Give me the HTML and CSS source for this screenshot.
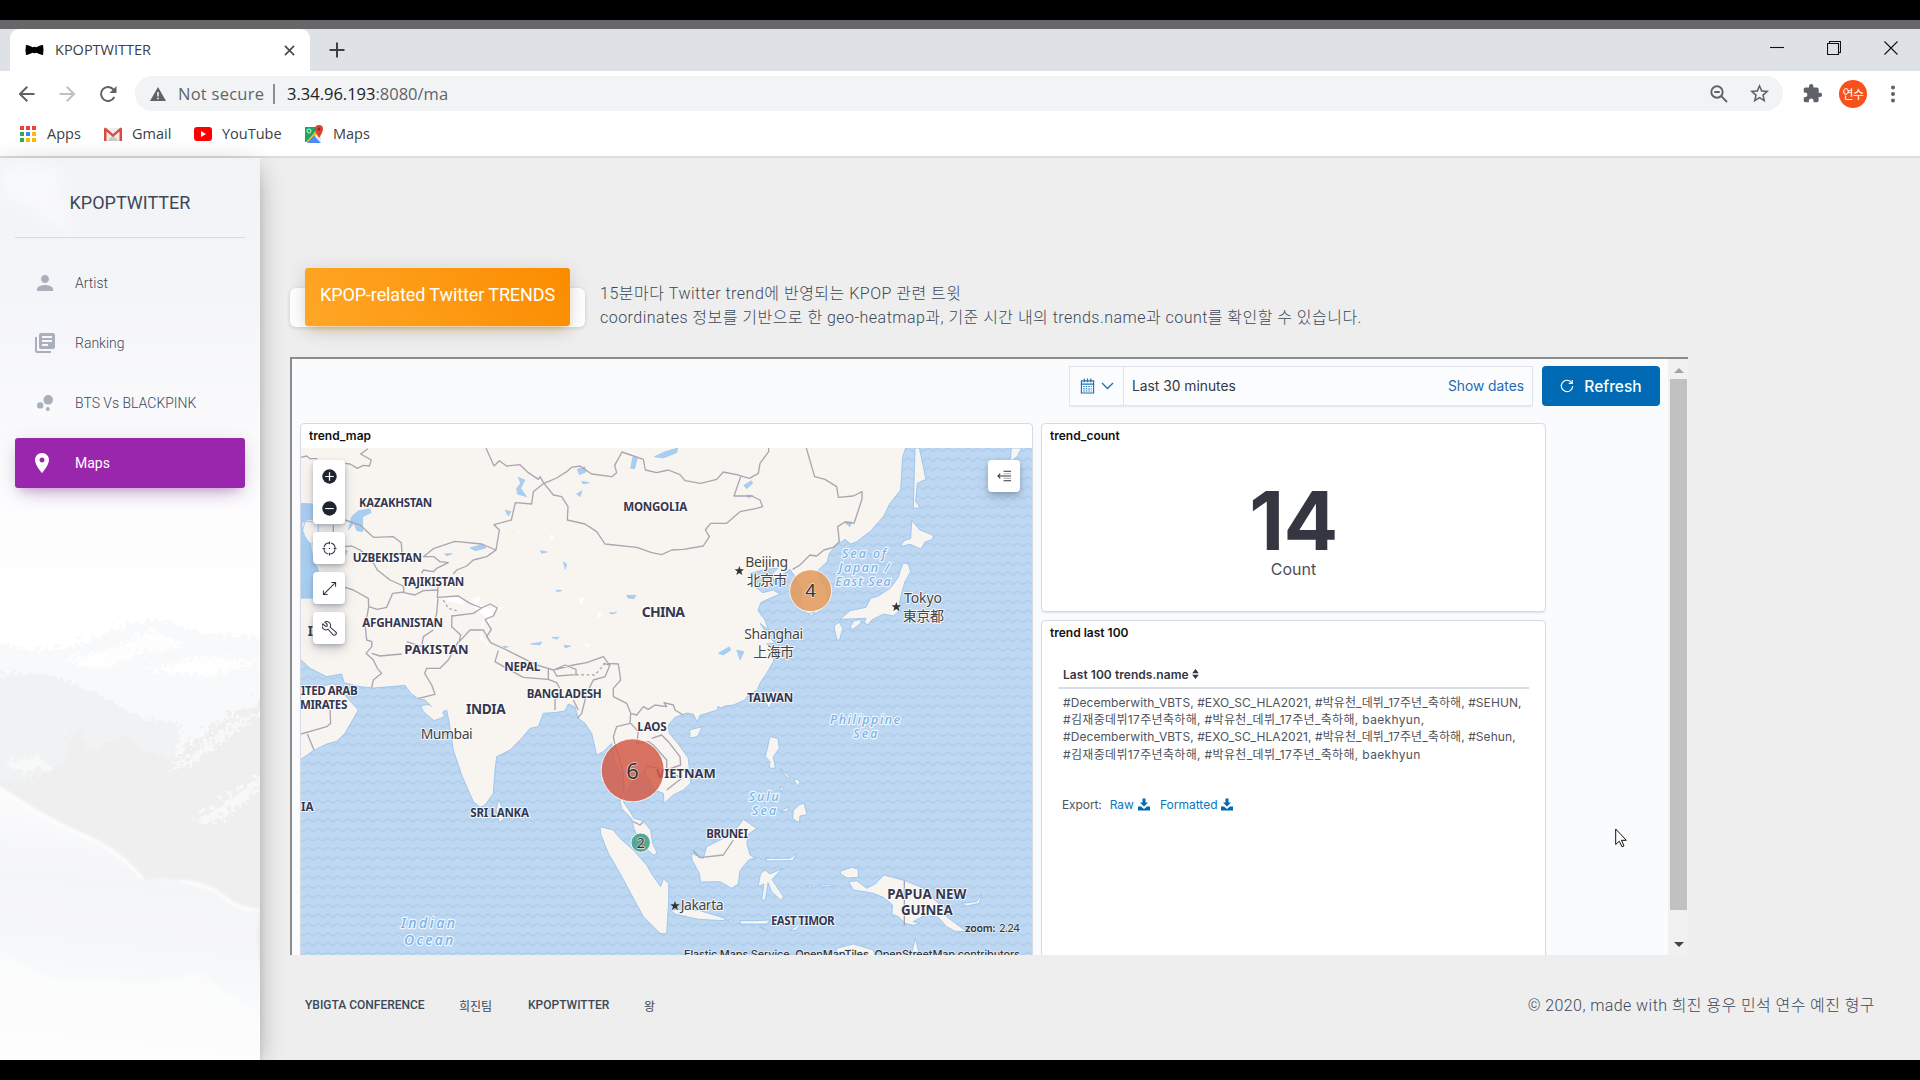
FILE: index.html
```html
<!DOCTYPE html>
<html lang="ko">
<head>
<meta charset="utf-8">
<title>KPOPTWITTER</title>
<link rel="stylesheet" href="styles.css">
</head>
<body>
<div class="screen">
  <div class="window-edge"></div>
  <header class="tabstrip">
    <div class="tab">
      <svg class="favicon" viewBox="0 0 20 12"><path d="M1 1Q2 0 8 3Q10 2.300 12 3Q18 0 19 1Q20 6 19 11Q18 12 12 9Q10 9.700 8 9Q2 12 1 11Q0 6 1 1Z"/></svg>
      <span class="tab-title">KPOPTWITTER</span>
      <svg class="tab-close" viewBox="0 0 12 12"><path d="M1 1L11 11M11 1L1 11"/></svg>
    </div>
    <svg class="tab-new" viewBox="0 0 16 16"><path d="M8 0.500V15.500M0.500 8H15.500"/></svg>
    <div class="window-buttons">
      <svg viewBox="0 0 14 14"><path d="M0 6.500H14"/></svg>
      <svg viewBox="0 0 14 14"><path d="M.5 2.500H11.500V13.500H.5ZM2.500 2.500V.5H13.500V11.500H11.500"/></svg>
      <svg viewBox="0 0 14 14"><path d="M.5 .5L13.500 13.500M13.500 .5L.5 13.500"/></svg>
    </div>
  </header>
  <div class="toolbar">
    <svg class="nav" viewBox="0 0 16 16"><path d="M15.500 8H1.500M8.300 .8L1 8L8.300 15.200"/></svg>
    <svg class="nav dim" viewBox="0 0 16 16"><path d="M.5 8H14.500M7.700 .8L15 8L7.700 15.200"/></svg>
    <svg class="nav reload" viewBox="0 0 18 18"><path d="M15.300 12A7 7 0 1 1 14.500 4.600L16 6.200"/><path class="solid" d="M17.500 1V8H10.500Z"/></svg>
    <div class="omnibox">
      <svg class="warn" viewBox="0 0 16 14"><path d="M8 0L16 14H0Z"/><path d="M8 5V9.500M8 10.700V12.300" stroke="#f1f3f4" stroke-width="1.600"/></svg>
      <span class="insecure">Not secure</span>
      <span class="divider"></span>
      <span class="url"><b>3.34.96.193</b>:8080/ma</span>
      <svg class="lens" viewBox="0 0 18 18"><circle cx="7" cy="7" r="5.700"/><path d="M4.300 7H9.700M11.200 11.200L17 17"/></svg>
      <svg class="star" viewBox="0 0 24 24"><path d="M22 9.240l-7.190-.62L12 2 9.190 8.630 2 9.240l5.460 4.730L5.820 21 12 17.270 18.180 21l-1.630-7.030L22 9.240zM12 15.400l-3.760 2.270 1-4.280-3.320-2.880 4.380-.38L12 6.100l1.710 4.040 4.380.38-3.320 2.880 1 4.280L12 15.400z"/></svg>
    </div>
    <svg class="puzzle" viewBox="0 0 24 24"><path d="M20.500 11H19V7c0-1.100-.9-2-2-2h-4V3.500a2.500 2.500 0 0 0-5 0V5H4c-1.100 0-2 .9-2 2v3.800h1.500a2.700 2.700 0 0 1 0 5.400H2V20c0 1.100.9 2 2 2h3.800v-1.500a2.700 2.700 0 0 1 5.400 0V22H17c1.100 0 2-.9 2-2v-4h1.500a2.500 2.500 0 0 0 0-5z"/></svg>
    <span class="avatar">연수</span>
    <svg class="dots" viewBox="0 0 4 18"><circle cx="2" cy="2.500" r="2"/><circle cx="2" cy="9" r="2"/><circle cx="2" cy="15.500" r="2"/></svg>
  </div>
  <nav class="bookmarks">
    <span class="bookmark apps"><svg viewBox="0 0 18 18"><path fill="#ea4335" d="M1 1h4v4H1zM7 1h4v4H7zM13 1h4v4h-4z"/><path fill="#34a853" d="M1 7h4v4H1zM1 13h4v4H1z"/><path fill="#4285f4" d="M7 7h4v4H7z"/><path fill="#fbbc05" d="M13 7h4v4h-4zM7 13h4v4H7zM13 13h4v4h-4z"/></svg><i>Apps</i></span>
    <span class="bookmark gmail"><svg viewBox="0 0 18 18"><path fill="#eee" d="M2 3H16V16H2Z"/><path fill="#ccc" d="M3 16L9 10L15 16Z"/><path fill="#dc4a3d" d="M0 4Q0 2.500 1.500 2.500L9 9L16.500 2.500Q18 2.500 18 4V16H15.500V6.500L9 12L2.500 6.500V16H0Z"/></svg><i>Gmail</i></span>
    <span class="bookmark youtube"><svg viewBox="0 0 18 18"><rect y="2" width="18" height="14" rx="3" fill="#f00"/><path fill="#fff" d="M7 6L12 9L7 12Z"/></svg><i>YouTube</i></span>
    <span class="bookmark gmaps"><svg viewBox="0 0 18 18"><path fill="#1fa463" d="M0 2H14L2 17H0Z"/><path fill="#fbbc05" d="M1 17L11 6L13.500 8.500L6 17Z"/><path fill="#4c8bf5" d="M2 18L9 10.500L16 18Z"/><path fill="#e8eaed" d="M13 9L16 12V17L10 10.500Z"/><circle cx="4" cy="6" r="2" fill="none" stroke="#d8f0e0"/><path fill="#db4437" d="M14 0A4 4 0 0 1 18 4Q18 7 14 13Q10 7 10 4A4 4 0 0 1 14 0Z"/><circle cx="14" cy="4" r="1.500" fill="#8c2a20"/></svg><i>Maps</i></span>
  </nav>

  <main class="page">
    <aside class="sidebar">
      <svg class="mountains" viewBox="0 0 260 902" preserveAspectRatio="none">
        <defs>
          <linearGradient id="sky" x2="0" y2="1"><stop offset="0" stop-color="#f1f3f5"/><stop offset=".14" stop-color="#f4f5f9"/><stop offset=".36" stop-color="#fcfcfe"/><stop offset=".5" stop-color="#fff"/></linearGradient>
          <linearGradient id="snow" x1=".4" x2=".3" y2="1"><stop offset="0" stop-color="#fdfdfe"/><stop offset=".35" stop-color="#f4f5f7"/><stop offset=".7" stop-color="#f8f9fa"/><stop offset="1" stop-color="#fdfdfd"/></linearGradient>
          <filter id="rough"><feTurbulence baseFrequency=".12" numOctaves="4" seed="5"/><feDisplacementMap in="SourceGraphic" scale="16"/></filter>
          <filter id="soft"><feGaussianBlur stdDeviation="8"/></filter>
          <filter id="haze"><feGaussianBlur stdDeviation="1.500"/></filter>
        </defs>
        <path fill="url(#sky)" d="M0 0H260V902H0Z"/>
        <path fill="#fff" opacity=".5" filter="url(#soft)" d="M0 10Q30 0 60 12Q75 30 50 38Q80 55 72 74Q40 60 25 45Q5 45 0 30Z"/>
        <g filter="url(#rough)">
          <path fill="#f7f9fa" d="M-10 480L30 490L70 485L105 470L150 458L200 472L280 480V620H-10Z"/>
          <path fill="#fff" opacity=".8" d="M60 500L110 485L150 470L185 485L140 490L100 508ZM140 510L200 495L260 500L210 515Z"/>
          <path fill="#f0f2f3" d="M-10 515L40 512L90 530L140 558L180 562L160 640H-10Z"/>
          <path fill="#efefef" d="M-10 620L40 618L60 600L75 560L85 590L125 575L140 590L170 600L215 560L280 530V775H190L80 720L-10 680Z"/>
          <path fill="#f7f8f8" d="M0 600L35 595L50 607L15 612ZM165 612L230 560L275 545L225 575L180 610ZM190 660L275 605V612L215 662Z"/>
        </g>
        <g filter="url(#haze)">
          <path fill="url(#snow)" d="M-5 625Q45 665 90 680Q120 692 145 722Q180 715 215 735Q240 755 265 755V907H-5Z"/>
          <path fill="none" stroke="#fff" stroke-width="3" d="M0 630Q50 664 90 680Q120 694 143 721M180 723Q210 726 225 740Q240 753 260 752"/>
          <path fill="#fefefe" opacity=".6" d="M-5 790L50 820L150 825L200 815L265 860V907H-5Z"/>
          <path fill="#eee" d="M262 745Q252 780 262 815Z"/>
        </g>
      </svg>
      <div class="brand">KPOPTWITTER</div>
      <ul class="menu">
        <li><svg viewBox="0 0 24 24"><path d="M12 12c2.210 0 4-1.790 4-4s-1.790-4-4-4-4 1.790-4 4 1.790 4 4 4zm0 2c-2.670 0-8 1.340-8 4v2h16v-2c0-2.660-5.330-4-8-4z"/></svg><span>Artist</span></li>
        <li><svg viewBox="0 0 24 24"><path d="M4 6H2v14c0 1.100.9 2 2 2h14v-2H4V6zm16-4H8c-1.100 0-2 .9-2 2v12c0 1.100.9 2 2 2h12c1.100 0 2-.9 2-2V4c0-1.100-.9-2-2-2zm-1 9H9V9h10v2zm-4 4H9v-2h6v2zm4-8H9V5h10v2z"/></svg><span>Ranking</span></li>
        <li><svg viewBox="0 0 24 24"><circle cx="7.200" cy="14.400" r="3.200"/><circle cx="14.800" cy="18" r="2"/><circle cx="15.200" cy="8.800" r="4.800"/></svg><span>BTS Vs BLACKPINK</span></li>
        <li class="active"><svg viewBox="0 0 24 24"><path d="M12 2C8.130 2 5 5.130 5 9c0 5.250 7 13 7 13s7-7.750 7-13c0-3.870-3.130-7-7-7zm0 9.500c-1.380 0-2.500-1.120-2.500-2.500s1.120-2.500 2.500-2.500 2.500 1.120 2.500 2.500-1.120 2.500-2.500 2.500z"/></svg><span>Maps</span></li>
      </ul>
    </aside>

    <section class="content">
      <div class="intro">
        <div class="card"><h4>KPOP-related Twitter TRENDS</h4></div>
        <p><span class="d1">15분마다 Twitter trend에 반영되는 KPOP 관련 트윗</span><br><span class="d2">coordinates 정보를 기반으로 한 geo-heatmap과, 기준 시간 내의 trends.name과 count를 확인할 수 있습니다.</span></p>
      </div>

      <div class="frame">
        <div class="dash">
          <div class="query">
            <div class="picker">
              <div class="quick">
                <svg class="cal" viewBox="0 0 16 16"><path d="M1.500 2.500H14.500V15.500H1.500ZM1.500 6H14.500M4.500 0V4M8 0V4M11.500 0V4"/><path stroke-dasharray="1.500 1.200" d="M3.500 8.500H12.500M3.500 11H12.500M3.500 13.300H12.500"/></svg>
                <svg class="chev" viewBox="0 0 12 8"><path d="M.5 1L6 6.500L11.500 1"/></svg>
              </div>
              <span class="range">Last 30 minutes</span>
              <span class="show">Show dates</span>
            </div>
            <button class="refresh"><svg viewBox="0 0 16 16"><path d="M13.500 4.500A6.500 6.500 0 1 0 14.500 8M14 1V5H10"/></svg><span>Refresh</span></button>
          </div>
          <div class="panels">
            <div class="panel map-panel">
              <h5>trend_map</h5>
              <div class="map">
                <svg class="canvas" viewBox="33 324 2196 1521" preserveAspectRatio="none">
                  <defs>
                    <pattern id="waves" width="30" height="28.500" patternUnits="userSpaceOnUse"><path d="M0 14Q7 24 15 17Q22 10 30 14" fill="none" stroke="#b0cde8" stroke-width="5"/></pattern>
                  </defs>
                  <rect x="33" y="324" width="2196" height="1521" fill="#bed8f3"/>
                  <rect x="33" y="324" width="2196" height="1521" fill="url(#waves)"/>
                  <g class="land">
                    <path d="M20 300H1856L1838 350L1832 450L1800 490L1780 530L1740 575L1700 605L1682 612L1665 598L1640 615L1618 640L1612 665L1585 690L1590 720L1608 745L1613 790L1590 812L1566 826L1548 818L1530 790L1535 750L1515 710L1500 688L1476 705L1450 720L1448 700L1465 684L1420 690L1380 700L1395 740L1418 758L1450 750L1470 762L1440 775L1412 788L1404 812L1425 840L1436 870L1410 850L1430 880L1455 910L1430 912L1458 930L1450 965L1430 1000L1410 1030L1402 1050L1375 1065L1365 1080L1330 1095L1305 1098L1290 1105L1285 1098L1282 1110L1230 1126L1222 1146L1210 1122L1190 1119L1155 1132L1135 1155L1138 1180L1165 1212L1195 1255L1202 1330L1180 1350L1150 1365L1122 1390L1120 1360L1095 1350L1070 1320L1045 1296L1035 1290L1030 1320L1005 1360L1000 1385L1017 1410L1032 1435L1060 1443L1082 1470L1088 1510L1102 1540L1090 1545L1070 1528L1045 1500L1030 1460L1026 1438L995 1405L990 1385L1003 1350L995 1300L975 1270L965 1210L940 1235L920 1245L912 1210L905 1180L885 1150L865 1135L855 1100L835 1092L825 1113L800 1117L760 1120L745 1160L720 1165L695 1195L660 1230L620 1250L615 1290L610 1360L585 1395L570 1402L550 1385L515 1305L490 1230L478 1150L470 1110L458 1116L464 1130L432 1142L400 1115L392 1097L418 1093L424 1100L405 1080L385 1076L362 1060L345 1036L300 1040L250 1044L210 1040L162 1028L155 1002L110 1010L60 985L33 960H20Z"/>
                    <path d="M20 1035L90 1040L132 1030L150 1060L165 1066L205 1110L165 1180L140 1204L110 1212L70 1232L33 1258H20Z"/>
                    <path d="M1875 324H1888L1908 418L1882 430L1877 485L1891 503L1870 505ZM2164 324H2195L2182 350L2160 365ZM1865 542L1890 570L1930 586L1928 598L1905 606L1893 627L1860 613L1830 620L1842 602L1862 595ZM1840 668L1855 672L1862 695L1845 725L1832 770L1825 815L1810 828L1780 822L1745 840L1735 854L1722 850L1728 835L1650 838L1680 812L1728 802L1742 775L1765 768L1800 745L1825 712L1832 688ZM1680 862L1692 842L1715 838L1710 852L1688 868ZM1632 858L1648 846L1658 865L1650 895L1642 903L1636 880ZM1555 822L1575 815L1565 828Z"/>
                    <path d="M626 1378L648 1430L628 1448L618 1410ZM930 1460L970 1470L990 1495L1030 1530L1070 1575L1085 1602L1112 1640L1120 1616L1136 1630L1136 1682L1130 1782L1110 1780L1060 1730L1025 1665L990 1600L955 1540L932 1482ZM1140 1710L1180 1708L1230 1712L1305 1735L1302 1742L1225 1738L1155 1722ZM1310 1740L1332 1741L1325 1748ZM1350 1742L1390 1742L1440 1740L1430 1752L1350 1752ZM1408 1760L1435 1772L1430 1774ZM1500 1772L1535 1745L1520 1770ZM1199 1170L1237 1160L1222 1190L1200 1194ZM1447 1050L1458 1062L1437 1106L1426 1085ZM1440 1190L1464 1195L1468 1225L1450 1250L1456 1285L1438 1284L1440 1265L1426 1250ZM1360 1438L1400 1465L1376 1482L1370 1510L1380 1545L1395 1553L1376 1560L1350 1592L1345 1632L1325 1645L1290 1625L1232 1626L1228 1600L1206 1560L1204 1540L1240 1555L1250 1520L1310 1490L1340 1465ZM1510 1412L1526 1395L1542 1390L1551 1424L1530 1428L1528 1448L1508 1436ZM1520 1317L1530 1325L1524 1340L1512 1320ZM1470 1340L1482 1345L1475 1355ZM1470 1286L1500 1310L1492 1314ZM1470 1415L1498 1400L1492 1414ZM1428 1555L1500 1555L1520 1540L1508 1562L1430 1563ZM1425 1590L1440 1602L1478 1585L1446 1618L1480 1670L1474 1682L1445 1655L1434 1628L1426 1680L1415 1680L1422 1632L1404 1640L1412 1600ZM1550 1640L1565 1636L1562 1645ZM1590 1632L1632 1636L1630 1640L1592 1638ZM1650 1594L1685 1582L1705 1588L1705 1612L1672 1614L1652 1602ZM1676 1625L1700 1622L1730 1645L1755 1632L1782 1605L1845 1622L1900 1644L1955 1700L1970 1730L2030 1775L1995 1774L1970 1760L1945 1732L1905 1725L1870 1745L1890 1750L1870 1756L1845 1750L1825 1730L1805 1722L1808 1695L1780 1672L1750 1660L1722 1655L1690 1650ZM2015 1690L2060 1685L2075 1662L2068 1690L2030 1698ZM1640 1825L1690 1812L1750 1830L1755 1850H1640ZM1876 1795L1890 1850H1862Z"/>
                    <path d="M45 545L85 545L85 610L60 612L35 580Z"/>
                  </g>
                  <g class="lakes">
                    <path d="M33 490L75 492V540Q40 535 35 555Q40 590 62 612L70 660L85 690V775H33ZM175 570L185 530L205 512L240 506L244 518L218 530L218 575L200 572L192 550ZM685 412L705 420L692 445L710 470L682 462L680 445L692 430ZM645 510L663 515L655 528ZM1022 385L1028 352L1042 354L1034 386ZM862 388L885 380L888 396L868 404ZM875 424L898 428L880 432ZM860 462L876 452L870 470ZM1092 350L1125 335L1163 324L1160 338L1120 354ZM540 624L580 612L588 624L556 632ZM1010 766L1038 766L1032 776L1014 774ZM752 632L772 636L755 640ZM820 666L830 672L826 688ZM464 641L486 641L470 648ZM798 750L816 752L802 755ZM958 818L980 818L965 822ZM785 892L808 892L800 898ZM722 912L755 906L750 915ZM822 916L842 918L826 924ZM640 918L655 920L642 924ZM165 630L172 632L168 645ZM1361 436L1384 422L1388 430L1370 446ZM1662 546L1685 545L1680 560ZM1372 465L1390 467L1375 474ZM1285 940L1318 920L1322 930L1300 945ZM1340 930L1362 935L1350 960Z"/>
                  </g>
                  <g class="snowfields"><path d="M550 775L575 770L560 792L600 805L650 800L610 815L595 850L580 835L570 900L590 905L600 930L575 885L585 830L550 800ZM780 582L792 592L782 600ZM868 776L886 770L872 795ZM920 815L936 825L925 835ZM455 772L505 765L525 795L480 785ZM680 575L694 578L686 582ZM880 912L906 915L890 922Z"/></g>
                  <g class="borders">
                    <path d="M33 352L50 348L60 356L82 356M165 370L180 372L202 385L220 376L238 378L244 360L212 342L234 326M588 324L612 378L628 362L650 378L690 374L715 398L745 418L750 410L762 430L800 414L830 395L845 382L870 378L905 402L965 410L980 398L974 376L996 336L1060 358L1066 390L1100 398L1135 390L1170 404L1185 422L1232 430L1280 418L1300 396L1340 404L1378 415L1405 400L1410 370L1436 335V324M762 430L790 465L815 470L834 500L832 540L885 552L920 575L945 612L1040 622L1085 638L1115 644L1145 630L1180 628L1240 618L1258 590L1246 570L1262 550L1310 550L1350 515L1400 505L1418 500L1410 480L1385 468L1332 468L1352 410M1549 324L1574 410L1605 418L1640 440L1645 472L1690 468L1716 455L1716 478L1692 550L1665 546L1643 560L1648 605L1630 622L1602 630L1580 648L1560 645L1530 675L1508 688"/>
                    <path d="M762 430L730 455L725 492L676 488L664 540L612 554L628 570L618 630L575 612L495 604L432 625L400 650L432 650L450 665L475 668L440 685L430 695L400 690L395 700M618 630L590 650L550 660L530 678L500 690L490 702M165 540L210 555L250 592L310 590L334 608L336 640M165 620L185 618L210 630L245 660L262 690L300 720L340 738L342 758L375 765L400 752L445 750M130 555V576M165 742L190 750L235 775L236 800L262 808L290 802L308 760L342 756M236 800L226 860L230 900L246 905L245 920L228 940L250 960L262 985L275 1000L250 1020L245 1043M444 740L442 772L505 768L540 790L575 804L600 792L622 804L610 828L585 838L604 868L590 890L602 908L650 930L700 955L740 975L775 985L790 990L850 975L890 968L940 950L955 970L985 972L992 1020L970 1045L970 1070L1010 1090L1022 1120L1040 1125L1060 1100L1075 1108L1095 1095L1130 1100L1122 1088L1150 1095L1155 1110L1180 1125M444 775L440 820L430 855M486 825L485 860L512 885L508 905L540 870L580 870L602 908M486 828L550 820L575 804M430 870L400 890L395 920L350 905M245 940L270 948L335 942M505 905L475 960L450 985L410 985L404 1000L425 1035L435 1063L385 1075M625 932L615 965L650 985L700 1012L775 1018L775 985M775 1018L800 1028L812 1050L795 1080L795 1110M790 990L825 975L858 988L858 1004L800 1008L790 990M940 970L960 975L945 1010L910 1020L890 1060L875 1120L862 1135M850 1080L865 1110M1022 1120L1020 1150L980 1160L970 1190L976 1220L990 1260L1000 1300L1002 1350M1022 1150L1045 1175L1040 1210L1075 1205L1090 1215L1130 1260L1130 1290M1085 1195L1115 1185L1135 1205L1170 1250L1172 1275L1130 1290L1070 1278L1062 1300L1080 1325M1130 1290L1175 1315L1130 1350M1030 1445L1050 1455L1060 1445M120 1110L122 1150L110 1160L33 1182M52 1182L72 1230M1210 1532L1230 1553L1300 1545L1330 1500M1843 1622V1757"/>
                    <path stroke-dasharray="8 8" d="M858 1004L915 1005L945 970M460 780L475 805L500 812"/>
                  </g>
                  <g class="country" font-size="35" lengthAdjust="spacingAndGlyphs">
                    <text x="207" y="500" textLength="220">KAZAKHSTAN</text><text x="1000" y="512" textLength="192">MONGOLIA</text><text x="188" y="667" textLength="208">UZBEKISTAN</text><text x="337" y="738" textLength="186">TAJIKISTAN</text><text x="217" y="860" textLength="242">AFGHANISTAN</text><text x="53" y="888" font-size="40">I</text><text x="343" y="942" textLength="193" font-size="39">PAKISTAN</text><text x="1055" y="832" textLength="130" font-size="42">CHINA</text><text x="643" y="993" textLength="108">NEPAL</text><text x="710" y="1075" textLength="225">BANGLADESH</text><text x="528" y="1123" textLength="119" font-size="41">INDIA</text><text x="1042" y="1172" textLength="88">LAOS</text><text x="33" y="1064" textLength="170">ITED ARAB</text><text x="30" y="1106" textLength="142">MIRATES</text><text x="33" y="1414">IA</text><text x="541" y="1431" textLength="176">SRI LANKA</text><text x="1098" y="1315" textLength="179" font-size="39">VIETNAM</text><text x="1372" y="1086" textLength="138">TAIWAN</text><text x="1249" y="1494" textLength="125">BRUNEI</text><text x="1443" y="1756" textLength="191">EAST TIMOR</text><text x="1792" y="1677" textLength="237" font-size="40">PAPUA NEW</text><text x="1833" y="1726" textLength="155" font-size="40">GUINEA</text>
                  </g>
                  <g class="city" font-size="42">
                    <text x="392" y="1198" textLength="156">Mumbai</text><text x="1172" y="1711" textLength="129">Jakarta</text><text x="1842" y="790" textLength="114">Tokyo</text><text x="1838" y="842" textLength="124">東京都</text><text x="1366" y="682" textLength="128">Beijing</text><text x="1370" y="735" textLength="122">北京市</text><text x="1363" y="898" textLength="176">Shanghai</text><text x="1390" y="950" textLength="122">上海市</text>
                    <path id="capital" d="M1348 678L1351.500 688H1362L1354 694.500L1357 705L1348 699L1339 705L1342 694.500L1334 688H1344.500Z"/><use href="#capital" x="471" y="108"/><use href="#capital" x="-193" y="1005"/>
                  </g>
                  <g class="sea" font-size="37">
                    <text x="1656" y="653" textLength="132">Sea of</text><text x="1646" y="696" textLength="152">Japan /</text><text x="1636" y="738" textLength="166">East Sea</text><text x="1620" y="1153" textLength="210">Philippine</text><text x="1690" y="1195" textLength="72">Sea</text><text x="1376" y="1382" textLength="90">Sulu</text><text x="1386" y="1424" textLength="72">Sea</text><text x="333" y="1765" textLength="162" font-size="42">Indian</text><text x="342" y="1815" textLength="148" font-size="42">Ocean</text>
                  </g>
                  <g class="points">
                    <circle cx="1562" cy="752" r="63" fill="#e29b5c" fill-opacity=".88"/><circle cx="1028" cy="1291" r="94.500" fill="#d25c48" fill-opacity=".85"/><circle cx="1052" cy="1508" r="29" fill="#54a794"/>
                  </g>
                  <g class="amount"><text x="1562" y="771" font-size="56">4</text><text x="1028" y="1316" font-size="66">6</text><text x="1052" y="1524" font-size="44">2</text></g>
                  <g class="meta"><text x="2024" y="1777" textLength="93" font-weight="600">zoom:</text><text x="2127" y="1777" textLength="63">2.24</text><text x="1182" y="1853" textLength="1008" font-weight="500">Elastic Maps Service, OpenMapTiles, OpenStreetMap contributors</text></g>
                </svg>
                <div class="controls">
                  <div class="ctl double"><svg viewBox="0 0 16 16"><circle cx="8" cy="8" r="7.700"/><path d="M8 3.500V12.500M3.500 8H12.500"/></svg><svg viewBox="0 0 16 16"><circle cx="8" cy="8" r="7.700"/><path d="M3.500 8H12.500"/></svg></div>
                  <div class="ctl"><svg class="line" viewBox="0 0 16 16"><circle cx="8" cy="8" r="6" stroke-dasharray="7.400 2" stroke-dashoffset="-1"/><path d="M8 .5V3.500M8 12.500V15.500M.5 8H3.500M12.500 8H15.500M7.300 8H8.700"/></svg></div>
                  <div class="ctl"><svg class="line" viewBox="0 0 16 16"><path d="M1.500 14.500L14.500 1.500M10 1.500H14.500V6M1.500 10V14.500H6"/></svg></div>
                  <div class="ctl"><svg class="line" viewBox="0 0 16 16"><path d="M3 1.200A4 4 0 0 1 8.600 6.500L14.600 11.700A1.900 1.900 0 0 1 11.800 14.700L6.500 8.700A4 4 0 0 1 1 3L3.500 5.500H5.500V3.500ZM13 13H13.400"/></svg></div>
                </div>
                <div class="ctl layers"><svg class="line" viewBox="0 0 16 16"><path d="M7 2.500H15M1 7.500H15M7 12.500H15M3.500 5L1 7.500L3.500 10"/><path stroke-opacity=".35" d="M7 5H15M7 10H15"/></svg></div>
              </div>
            </div>
            <div class="side">
              <div class="panel count">
                <h5>trend_count</h5>
                <div class="metric"><strong>14</strong><span>Count</span></div>
              </div>
              <div class="panel list">
                <h5>trend last 100</h5>
                <div class="thead">Last 100 trends.name <svg viewBox="0 0 8 12"><path d="M4 0L8 5H0ZM4 12L0 7H8Z"/></svg></div>
                <div class="rows">
                  <div class="r1">#Decemberwith_VBTS, #EXO_SC_HLA2021, #박유천_데뷔_17주년_축하해, #SEHUN,</div>
                  <div class="r2">#김재중데뷔17주년축하해, #박유천_데뷔_17주년_축하해, baekhyun,</div>
                  <div class="r1">#Decemberwith_VBTS, #EXO_SC_HLA2021, #박유천_데뷔_17주년_축하해, #Sehun,</div>
                  <div class="r2">#김재중데뷔17주년축하해, #박유천_데뷔_17주년_축하해, baekhyun</div>
                </div>
                <div class="export"><span>Export:</span><a>Raw <svg viewBox="0 0 12 12"><path d="M4.500 0H7.500V4H10L6 8L2 4H4.500ZM0 8H3L6 10.500L9 8H12V12H0Z"/></svg></a><a>Formatted <svg viewBox="0 0 12 12"><path d="M4.500 0H7.500V4H10L6 8L2 4H4.500ZM0 8H3L6 10.500L9 8H12V12H0Z"/></svg></a></div>
              </div>
            </div>
          </div>
        </div>
        <div class="scrollbar"><i class="up"></i><b></b><i class="down"></i></div>
      </div>

      <footer>
        <span class="f1">YBIGTA CONFERENCE</span><span class="f2">희진팀</span><span class="f3">KPOPTWITTER</span><span class="f4">왕</span>
        <span class="copy">© 2020, made with 희진 용우 민석 연수 예진 형구</span>
      </footer>
    </section>
  </main>
  <svg class="cursor" viewBox="0 0 12 20"><path d="M.7 1V16.500L4.300 13.200L7 18.800L9 17.900L6.500 12.300H11.300Z"/></svg>
</div>
</body>
</html>
```
FILE: styles.css
```css
* { box-sizing: border-box; }
body { margin: 0; background: #000; }
svg { flex: none; display: block; }
.screen {
  position: relative;
  width: 1920px;
  height: 1080px;
  padding: 20px 0;
  overflow: hidden;
  display: flex;
  flex-direction: column;
  font-family: "Open Sans", "Noto Sans CJK KR", sans-serif;
}
.window-edge { height: 9px; background: #676769; flex: none; }

/* browser chrome */
.tabstrip { height: 42px; flex: none; background: #dee1e6; display: flex; align-items: center; padding-left: 10px; }
.tab { width: 300px; height: 42px; background: #fff; border-radius: 9px 9px 0 0; display: flex; align-items: center; padding: 0 15px 0 15px; }
.favicon { width: 19px; height: 12px; }
.tab-title { margin-left: 11px; padding-bottom: 2px; font-size: 14.500px; letter-spacing: 0; color: #3c4043; flex: 1; white-space: nowrap; }
.tab-close { width: 11px; height: 11px; fill: none; stroke: #45494d; stroke-width: 1.800; }
.tab-new { width: 16px; height: 16px; margin-left: 19px; fill: none; stroke: #3c4043; stroke-width: 2; }
.window-buttons { margin-left: auto; display: flex; gap: 43px; padding: 0 22px 5px 0; }
.window-buttons svg { width: 14px; height: 14px; fill: none; stroke: #111; stroke-width: 1.100; }
.toolbar { height: 45px; flex: none; background: #fff; display: flex; align-items: center; padding: 0 25px 0 19px; color: #5f6368; }
.nav { width: 16px; height: 16px; margin-right: 24px; fill: none; stroke: #5f6368; stroke-width: 2; }
.nav.dim { stroke: #bdc1c6; }
.nav.reload { width: 18px; height: 18px; margin-right: 18px; }
.nav .solid { fill: #5f6368; stroke: none; }
.omnibox { width: 1650px; height: 35px; border-radius: 18px; background: #f1f3f4; display: flex; align-items: center; padding: 0 12px 0 15px; font-size: 16.500px; white-space: nowrap; }
.warn { width: 16px; height: 14px; fill: #5f6368; }
.insecure { margin-left: 12px; width: 89px; letter-spacing: .25px; }
.divider { width: 2px; height: 20px; background: #8b8f93; margin: 0 12px 0 6px; }
.url { flex: 1; letter-spacing: 0; }
.url b { font-weight: 400; color: #202124; }
.lens { width: 18px; height: 18px; fill: none; stroke: #5f6368; stroke-width: 1.900; margin-right: 20px; }
.star { width: 23px; height: 23px; fill: #5f6368; }
.puzzle { width: 21px; height: 21px; margin-left: 19px; fill: #5f6368; }
.avatar { width: 28px; height: 28px; margin-left: 16px; border-radius: 50%; background: #f9511d; color: #fff; font-size: 12px; letter-spacing: -.5px; display: flex; align-items: center; justify-content: center; }
.dots { width: 4px; height: 18px; margin-left: 24px; fill: #5f6368; }
.bookmarks { height: 42px; flex: none; background: #fff; border-bottom: 2px solid #dadce0; display: flex; padding: 0 0 5px 19px; font-size: 14.500px; color: #3c4043; }
.bookmark { display: flex; align-items: center; gap: 10px; white-space: nowrap; }
.bookmark svg { width: 18px; height: 18px; }
.bookmark i { font-style: normal; }
.apps { width: 85px; }
.gmail { width: 90px; }
.youtube { width: 111px; }

/* application page */
.page { flex: 1; min-height: 0; background: #eee; display: flex; font-family: Roboto, "Noto Sans CJK KR", sans-serif; }
.sidebar { width: 260px; position: relative; flex: none; z-index: 1; box-shadow: 0 10px 30px -12px rgba(0,0,0,.42), 0 4px 25px rgba(0,0,0,.12), 0 8px 10px -5px rgba(0,0,0,.2); background: #fff; padding: 0 15px; }
.mountains { position: absolute; inset: 0; width: 260px; height: 902px; }
.brand { position: relative; height: 80px; padding-top: 10px; border-bottom: 1px solid #d8dadd; display: flex; align-items: center; justify-content: center; font-size: 18px; color: #3c4858; }
.menu { position: relative; margin: 20px 0 0; padding: 0; list-style: none; display: grid; gap: 10px; }
.menu li { height: 50px; border-radius: 3px; display: flex; align-items: center; padding-left: 18px; font-size: 14px; font-weight: 300; color: #3c4858; }
.menu svg { width: 24px; height: 24px; fill: #a9afbb; }
.menu span { margin-left: 18px; padding-bottom: 1px; }
.menu .active { background: #9b26ae; color: #fff; font-weight: 400; padding-left: 15px; box-shadow: 0 12px 20px -10px rgba(156,39,176,.28), 0 4px 20px rgba(0,0,0,.12), 0 7px 8px -5px rgba(156,39,176,.2); }
.menu .active svg { fill: #fff; }
.menu .active span { margin-left: 21px; }
.content { flex: 1; min-width: 0; padding: 110px 45px 0 30px; display: flex; flex-direction: column; }
.intro { display: flex; gap: 15px; height: 89px; }
.card { width: 295px; height: 39px; margin-top: 20px; background: #fff; border-radius: 6px; box-shadow: 0 1px 4px rgba(0,0,0,.14); padding: 0 15px; }
.card h4 { margin: -20px 0 0; height: 58px; border-radius: 3px; background: linear-gradient(60deg, #ffa726, #fb8c00); color: #fff; font-size: 18px; font-weight: 400; letter-spacing: -.1px; display: flex; align-items: center; justify-content: center; padding-bottom: 6px; white-space: nowrap; box-shadow: 0 4px 20px rgba(0,0,0,.14), 0 7px 10px -5px rgba(255,152,0,.4); }
.intro p { margin: 14px 0 0; font-size: 16px; line-height: 24px; font-weight: 300; color: #3c4858; white-space: nowrap; }
.d1 { letter-spacing: .5px; }
.d2 { letter-spacing: .47px; }

/* embedded dashboard */
.frame { width: 1398px; height: 598px; flex: none; border: solid #8c8c8e; border-width: 2px 0 0 2px; display: flex; background: #fafbfd; font-family: Inter, "Noto Sans CJK KR", sans-serif; overflow: hidden; }
.dash { flex: 1; min-width: 0; padding: 7px 8px 0 8px; }
.query { display: flex; justify-content: flex-end; gap: 9px; height: 57px; }
.picker { width: 464px; height: 40px; border: 1px solid #dfe3ec; background: #fbfcfd; display: flex; align-items: center; box-shadow: 0 2px 2px -1px rgba(152,162,179,.25); font-size: 14px; color: #343741; white-space: nowrap; }
.quick { width: 54px; height: 38px; border-right: 1px solid #dfe3ec; display: flex; align-items: center; gap: 6px; padding-left: 10px; }
.cal { width: 15px; height: 16px; fill: none; stroke: #1d72b0; stroke-width: 1.200; }
.chev { width: 13px; height: 8px; fill: none; stroke: #1d72b0; stroke-width: 1.300; }
.range { margin-left: 8px; flex: 1; font-size: 13.800px; }
.show { color: #1d6bb0; margin-right: 8px; font-size: 13.800px; }
.refresh { width: 118px; height: 40px; border: 0; padding: 0; border-radius: 4px; background: #006bb4; color: #fff; display: flex; align-items: center; justify-content: center; gap: 10px; font: 500 15.500px Inter, sans-serif; }
.refresh svg { width: 14px; height: 14px; fill: none; stroke: #fff; stroke-width: 1.300; }
.panels { display: flex; gap: 8px; }
.panel { background: #fff; border: 1px solid #d5dae5; border-radius: 4px; box-shadow: 0 2px 2px -1px rgba(152,162,179,.3); overflow: hidden; }
.panel h5 { margin: 0; height: 24px; padding-left: 8px; font-size: 12px; line-height: 24px; font-weight: 600; color: #111; }
.map-panel { width: 733px; height: 700px; }
.map { position: relative; height: 507px; }
.canvas { width: 732px; height: 507px; font-family: "Noto Sans", "Noto Sans CJK JP", sans-serif; }
.land path { fill: #f8f4f0; stroke: #93c2ee; stroke-width: 2.500; }
.lakes path { fill: #a8cef1; stroke: #8fc0ef; stroke-width: 1.500; }
.snowfields path { fill: #fff; }
.borders path { fill: none; stroke: #aaa5b0; stroke-width: 4; stroke-linejoin: round; }
.points circle { stroke: #fff; stroke-width: 2.500; }
.canvas text { paint-order: stroke; stroke-linejoin: round; }
.country text { font-weight: 700; fill: #343750; stroke: #fff; stroke-opacity: .8; stroke-width: 6; }
.city text { fill: #444; stroke: #fff; stroke-opacity: .8; stroke-width: 6; }
.city path { fill: #333; }
.sea text { font-style: italic; font-weight: 500; fill: #78b2e8; stroke: #eef6fd; stroke-width: 7; }
.amount text { text-anchor: middle; fill: #333; stroke: #eadfd6; stroke-width: 4; }
.meta text { font-family: Inter, sans-serif; font-size: 33px; fill: #343741; stroke: #e3eaf2; stroke-width: 5; }
.controls { position: absolute; left: 12px; top: 12px; display: flex; flex-direction: column; gap: 8px; }
.ctl { width: 32px; height: 32px; background: #fff; border-radius: 4px; display: flex; flex-direction: column; align-items: center; justify-content: center; box-shadow: 0 6px 12px -1px rgba(65,78,101,.25), 0 2px 4px rgba(65,78,101,.3); }
.ctl.double { height: 64px; gap: 17px; }
.ctl svg { width: 15px; height: 15px; fill: #1f2430; stroke: #fff; stroke-width: 1.300; }
.ctl svg circle { stroke: none; }
.ctl svg.line, .ctl svg.line circle { fill: none; stroke: #343741; stroke-width: 1.100; }
.ctl.layers { position: absolute; right: 12px; top: 12px; }
.side { width: 505px; display: flex; flex-direction: column; gap: 8px; }
.count { height: 189px; }
.metric { display: flex; flex-direction: column; align-items: center; padding-top: 35px; color: #343741; }
.metric strong { font-size: 81px; line-height: 76px; font-weight: 700; letter-spacing: -.5px; }
.metric span { font-size: 16px; line-height: 20px; margin-top: 0; color: #4c5059; }
.list { height: 500px; }
.thead { margin: 18px 16px 0 16px; padding-left: 5px; height: 26px; border-bottom: 2px solid #d9dde6; display: flex; align-items: center; gap: 3px; padding-bottom: 2px; font-size: 12px; font-weight: 600; color: #343741; letter-spacing: .05px; }
.thead svg { width: 7px; height: 10px; fill: #343741; }
.rows { padding: 5px 0 0 21px; font-size: 12px; line-height: 17.200px; color: #4f535c; white-space: nowrap; }
.r1 { letter-spacing: .08px; }
.r2 { letter-spacing: .34px; }
.export { display: flex; padding: 32px 0 0 20px; font-size: 12px; line-height: 20px; color: #4f535c; letter-spacing: -.1px; }
.export a { color: #0a76bd; margin-left: 8px; display: flex; align-items: center; gap: 4px; letter-spacing: 0; }
.export a + a { margin-left: 10px; }
.export svg { width: 12px; height: 13px; fill: #006bb4; }
.scrollbar { width: 20px; background: #f1f1f1; display: flex; flex-direction: column; align-items: center; padding: 9px 1px 8px 2px; }
.scrollbar b { width: 17px; height: 531px; background: #c1c1c1; margin-top: 6px; }
.scrollbar i { width: 0; height: 0; border: 5px solid transparent; }
.scrollbar .up { border-bottom-color: #a3a3a3; border-top: 0; }
.scrollbar .down { border-top-color: #444; border-bottom: 0; margin-top: auto; }

footer { height: 100px; display: flex; align-items: center; padding-left: 15px; font-size: 12px; color: #3c4858; font-weight: 500; white-space: nowrap; }
.f1 { width: 154px; }
.f2 { width: 69px; font-weight: 400; }
.f3 { width: 116px; }
.f4 { font-weight: 400; }
.copy { margin-left: auto; padding-bottom: 3px; font-size: 16px; font-weight: 300; letter-spacing: .42px; }
.cursor { position: absolute; left: 1615px; top: 828px; width: 12px; height: 20px; fill: #fff; stroke: #111; stroke-width: 1; }
```
